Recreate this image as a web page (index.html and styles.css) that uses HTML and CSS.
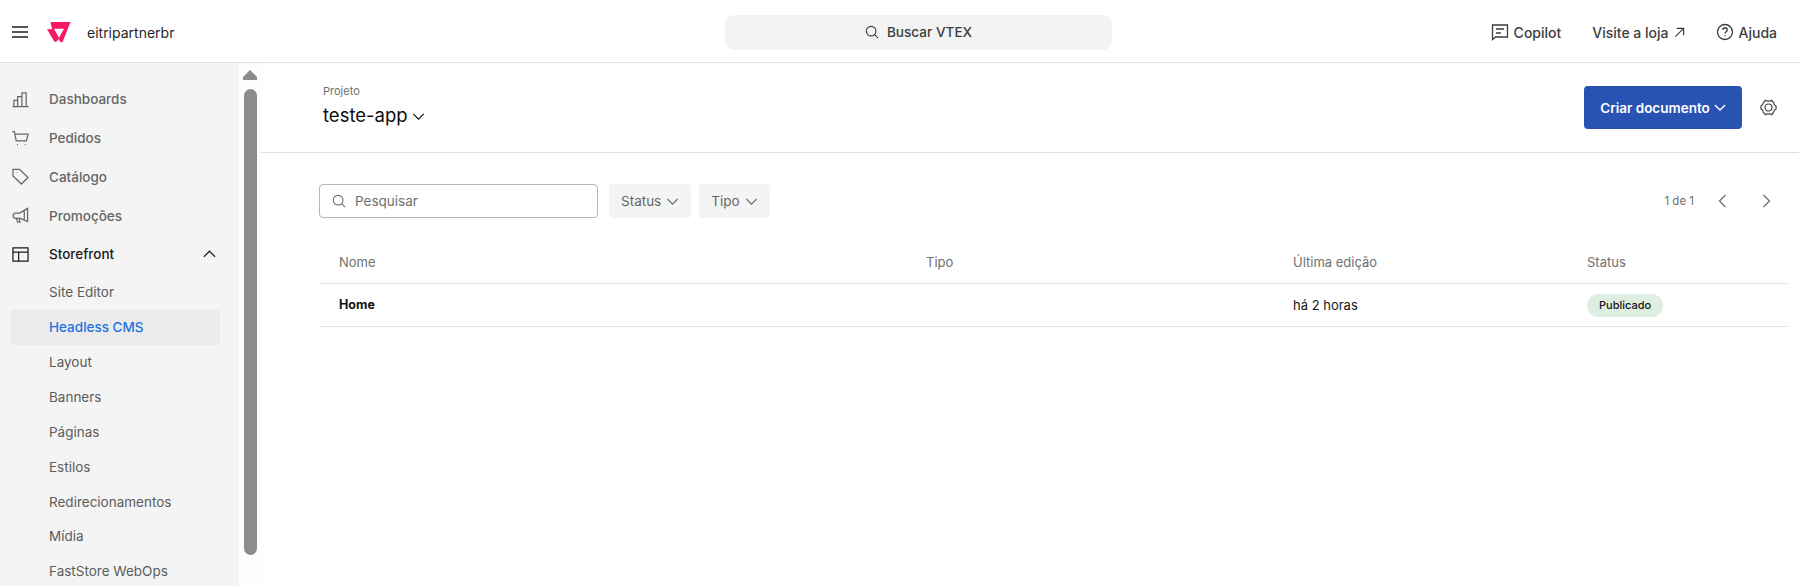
FILE: index.html
```html
<!DOCTYPE html>
<html lang="pt-BR">
<head>
  <meta charset="UTF-8" />
  <title>Headless CMS - VTEX</title>
  <link rel="stylesheet" href="styles.css">
</head>
<body>
  <!-- HEADER -->
  <header class="topbar">
    <div class="topbar-left">
      <svg class="icon menu-icon" viewBox="0 0 16 12"><path d="M0 1h16M0 6h16M0 11h16"/></svg>
      <svg class="logo" viewBox="0 0 24 21"><path fill="#f71963" fill-rule="evenodd" d="M3.500 0H23.500L15.800 19.500Q15 20.800 13.500 20L11.700 17 9.500 19.500Q8 20.500 7 19L0 7.300H5ZM7 6.800H17L12 15.800Z"/></svg>
      <span class="account">eitripartnerbr</span>
    </div>
    <div class="global-search">
      <svg class="icon" viewBox="0 0 16 16"><circle cx="7" cy="7" r="5.500"/><path d="M11 11l4 4"/></svg>
      <span>Buscar VTEX</span>
    </div>
    <nav class="topbar-right">
      <a><svg class="icon" viewBox="0 0 18 18"><path d="M1.500 2h15v12H4.500l-3 2.500zM5 6h8M5 10h5"/></svg>Copilot</a>
      <a>Visite a loja<svg class="icon small" viewBox="0 0 12 12"><path d="M1.500 10.500l9-9M3 1.500h7.500V9"/></svg></a>
      <a><svg class="icon" viewBox="0 0 18 18"><circle cx="9" cy="9" r="7.500"/><path d="M6.800 7c0-3 4.500-3 4.500 0 0 1.700-2.300 1.700-2.300 3.500M9 12.300v1"/></svg>Ajuda</a>
    </nav>
  </header>

  <div class="layout">
    <!-- SIDEBAR -->
    <aside class="sidebar">
      <ul class="nav-main">
        <li><svg class="icon" viewBox="0 0 18 16"><path d="M.5 15.500h17M2 15.500V9h4v6.500M6 15.500V5h4.500v10.500M10.500 15.500V1H15v14.500"/></svg>Dashboards</li>
        <li><svg class="icon" viewBox="0 0 18 16"><path d="M.2.800h2.300l2 9.700h10.800L17 3.300H3M5.300 14.500h1M13.500 14.500h1"/></svg>Pedidos</li>
        <li><svg class="icon" viewBox="0 0 18 18"><path d="M1 1.500h7l9 8.500-7 7-9-8.500zM4.800 4.800h.4"/></svg>Catálogo</li>
        <li><svg class="icon" viewBox="0 0 18 18"><path d="M16.500 1.500v14L9 12H3.500C.5 12 .5 6.500 3.500 6.500H8zM4.500 12l1.500 4h2.500L7.500 12M13 4v9"/></svg>Promoções</li>
        <li class="current"><svg class="icon" viewBox="0 0 18 16"><path d="M1 1h16v14H1zM1 5.500h16M7 5.500V15"/></svg>Storefront
          <svg class="icon caret" viewBox="0 0 14 8"><path d="M1 7l6-6 6 6"/></svg></li>
      </ul>
      <ul class="nav-sub">
        <li>Site Editor</li>
        <li class="active">Headless CMS</li>
        <li>Layout</li>
        <li>Banners</li>
        <li>Páginas</li>
        <li>Estilos</li>
        <li>Redirecionamentos</li>
        <li>Mídia</li>
        <li>FastStore WebOps</li>
      </ul>
    </aside>
    <div class="scrollbar">
      <span class="scroll-arrow"></span>
      <span class="scroll-thumb"></span>
    </div>

    <!-- MAIN CONTENT -->
    <main class="main">
      <div class="page-header">
        <div class="page-title">
          <div class="eyebrow">Projeto</div>
          <h1>teste-app<svg class="icon" viewBox="0 0 14 8"><path d="M1 1l6 6 6-6"/></svg></h1>
        </div>
        <div class="page-actions">
          <button class="primary-btn">Criar documento<svg class="icon" viewBox="0 0 14 8"><path d="M1 1l6 6 6-6"/></svg></button>
          <svg class="icon gear" viewBox="0 0 18 18"><path d="M5.500 1.500Q9 3 12.500 1.500L14.500 4.200Q14.800 6.500 17 7.500V10.500Q14.800 11.500 14.500 13.800L12.500 16.500Q9 15 5.500 16.500L3.500 13.800Q3.200 11.500 1 10.500V7.500Q3.200 6.500 3.500 4.200Z" stroke-linejoin="round"/><circle cx="9" cy="9" r="3.700"/></svg>
        </div>
      </div>

      <div class="content">
        <div class="toolbar">
          <label class="search-box">
            <svg class="icon" viewBox="0 0 16 16"><circle cx="7" cy="7" r="5.500"/><path d="M11 11l4 4"/></svg>
            <span>Pesquisar</span>
          </label>
          <div class="filter">Status<svg class="icon" viewBox="0 0 14 8"><path d="M1 1l6 6 6-6"/></svg></div>
          <div class="filter">Tipo<svg class="icon" viewBox="0 0 14 8"><path d="M1 1l6 6 6-6"/></svg></div>
          <div class="pager">
            <span>1 de 1</span>
            <svg class="icon" viewBox="0 0 8 14"><path d="M7 1L1 7l6 6"/></svg>
            <svg class="icon" viewBox="0 0 8 14"><path d="M1 1l6 6-6 6"/></svg>
          </div>
        </div>

        <div class="table-row table-head">
          <div>Nome</div><div>Tipo</div><div>Última edição</div><div>Status</div>
        </div>
        <div class="table-row table-body">
          <div class="doc-name">Home</div><div></div><div class="doc-date">há 2 horas</div><div><span class="pill">Publicado</span></div>
        </div>
      </div>
    </main>
  </div>
</body>
</html>
```

FILE: styles.css
```css
/* GLOBAL */
:root {
  --border: #e0e0e0;
  --muted: #707070;
  --ink: #1f1f1f;
  --soft: #f4f4f4;
}
* {
  margin: 0;
  padding: 0;
  box-sizing: border-box;
}
html, body {
  height: 586px;
  overflow: hidden;
}
body {
  font-family: Inter, "Noto Sans", sans-serif;
  font-size: 14px;
  color: var(--ink);
  background: #fff;
}
ul {
  list-style: none;
}
.icon {
  fill: none;
  stroke: currentColor;
  stroke-width: 1.3;
  flex: none;
}

/* HEADER */
.topbar {
  height: 63px;
  border-bottom: 1px solid var(--border);
  display: grid;
  grid-template-columns: 713px 387px 1fr;
  align-items: center;
  padding: 2px 22px 0 12px;
}
.topbar-left {
  display: flex;
  align-items: center;
}
.menu-icon {
  width: 16px;
  height: 12px;
  margin-right: 19px;
  stroke-width: 1.5;
}
.logo {
  width: 24px;
  height: 21px;
  margin-right: 16px;
}
.account {
  font-size: 14px;
}
.global-search {
  height: 35px;
  background: #f3f3f3;
  border-radius: 9px;
  display: flex;
  align-items: center;
  justify-content: center;
  gap: 8px;
  font-size: 13.600px;
  font-weight: 500;
  color: #3d3d3d;
}
.global-search .icon {
  width: 14px;
  height: 14px;
}
.topbar-right {
  display: flex;
  justify-content: flex-end;
  gap: 31px;
  font-size: 14px;
  font-weight: 500;
  color: #3d3d3d;
}
.topbar-right a {
  display: flex;
  align-items: center;
  gap: 5px;
}
.topbar-right .icon {
  width: 18px;
  height: 18px;
}
.topbar-right .icon.small {
  width: 11px;
  height: 11px;
}

/* LAYOUT */
.layout {
  display: flex;
  height: 523px;
}

/* SIDEBAR */
.sidebar {
  width: 239px;
  flex: none;
  background: var(--soft);
  padding: 17px 19px 0 10px;
  color: #5c5c5c;
}
.nav-main li {
  height: 38.750px;
  display: flex;
  align-items: center;
  gap: 20px;
  padding-left: 2px;
  font-size: 13.500px;
  font-weight: 500;
}
.nav-main li:not(.current) {
  color: #666;
}
.nav-main .icon {
  width: 17px;
  height: 17px;
}
.nav-main .current {
  color: #1a1a1a;
}
.nav-main .caret {
  width: 13px;
  height: 8px;
  margin-left: auto;
  margin-right: 4px;
}
.nav-sub {
  margin-top: 1px;
}
.nav-sub li {
  height: 34.900px;
  display: flex;
  align-items: center;
  padding-left: 39px;
  font-size: 13.500px;
  border-radius: 4px;
}
.nav-sub .active {
  background: #ebebeb;
  color: #1f74e0;
  font-weight: 500;
}

/* SCROLLBAR */
.scrollbar {
  width: 22px;
  flex: none;
  background: #fdfdfd;
  position: relative;
  padding: 7px 5px 0 4px;
}
.scroll-arrow {
  display: block;
  width: 14px;
  height: 10px;
  background: #8c8c8c;
  clip-path: polygon(50% 0, 100% 70%, 100% 100%, 0 100%, 0 70%);
}
.scroll-thumb {
  display: block;
  width: 13px;
  height: 466px;
  margin: 9px 0 0 1px;
  background: #8c8c8c;
  border-radius: 7px;
}

/* MAIN */
.main {
  flex: 1;
  min-width: 0;
}
.page-header {
  height: 90px;
  border-bottom: 1px solid var(--border);
  display: flex;
  justify-content: space-between;
  align-items: flex-start;
  padding: 21px 22px 0 62px;
}
.eyebrow {
  font-size: 11px;
  color: var(--muted);
  line-height: 14px;
}
h1 {
  font-size: 18.500px;
  font-weight: 400;
  color: #0c0c0c;
  line-height: 26px;
  margin-top: 4px;
  display: flex;
  align-items: center;
  gap: 4px;
}
h1 .icon {
  width: 13px;
  height: 7px;
  margin-top: 2px;
}
.page-actions {
  display: flex;
  align-items: center;
  gap: 18px;
  margin-top: 2px;
}
.primary-btn {
  width: 158px;
  height: 43px;
  border: none;
  border-radius: 4px;
  background: #2953b2;
  color: #fff;
  font: 600 13.500px Inter, sans-serif;
  display: flex;
  align-items: center;
  justify-content: center;
  gap: 4px;
}
.primary-btn .icon {
  width: 12px;
  height: 7px;
  stroke-width: 1.500;
}
.gear {
  width: 17px;
  height: 17px;
  color: #444;
}
.content {
  padding: 31px 12px 0 58px;
}
.toolbar {
  display: flex;
  align-items: center;
  gap: 8px;
  height: 34px;
}
.search-box {
  width: 279px;
  height: 34px;
  border: 1px solid #b5b5b5;
  border-radius: 4px;
  display: flex;
  align-items: center;
  gap: 9px;
  padding-left: 12px;
  margin-right: 3px;
  color: var(--muted);
  font-size: 13.500px;
}
.search-box .icon {
  width: 14px;
  height: 14px;
}
.filter {
  height: 34px;
  padding: 0 12px;
  background: var(--soft);
  border-radius: 4px;
  display: flex;
  align-items: center;
  gap: 5px;
  font-size: 13.500px;
  color: #666;
}
.filter .icon {
  width: 13px;
  height: 7px;
}
.pager {
  margin-left: auto;
  display: flex;
  align-items: center;
  font-size: 11.500px;
  color: var(--muted);
  padding-right: 16px;
}
.pager .icon {
  width: 9px;
  height: 14px;
  margin-left: 35px;
}
.pager span + .icon {
  margin-left: 24px;
}
.table-row {
  display: grid;
  grid-template-columns: 587px 367px 294px 1fr;
  padding-left: 20px;
  align-items: center;
  border-bottom: 1px solid var(--border);
}
.table-head {
  height: 66px;
  padding-top: 22px;
  color: var(--muted);
  font-size: 13px;
}
.table-body {
  height: 43px;
  font-size: 13px;
  color: #141414;
}
.doc-name {
  font-weight: 700;
  font-size: 12.500px;
  padding-bottom: 2px;
}
.doc-date {
  padding-bottom: 1px;
}
.pill {
  display: inline-flex;
  align-items: center;
  height: 23px;
  padding: 0 12px;
  border-radius: 12px;
  background: #deeee0;
  font-size: 11px;
  font-weight: 500;
}
```
